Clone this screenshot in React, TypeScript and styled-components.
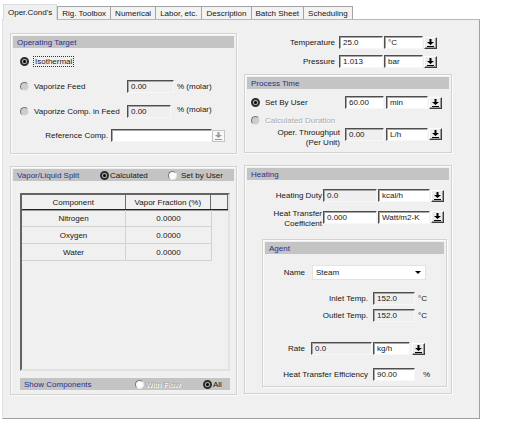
import React from "react";
import styled, { createGlobalStyle, css } from "styled-components";

const GlobalStyle = createGlobalStyle`
  body {
    margin: 0;
    background: #fff;
    font-family: "Liberation Sans", Arial, sans-serif;
    font-size: 8px;
    color: #161616;
  }
`;

const Screen = styled.div`
  width: 506px;
  height: 433px;
`;

const TabBar = styled.div`
  position: relative;
  z-index: 1;
  display: flex;
  align-items: flex-end;
  height: 19px;
  padding-left: 3px;
  box-sizing: border-box;
`;

const Tab = styled.div<{ $active?: boolean }>`
  box-sizing: border-box;
  display: flex;
  align-items: center;
  height: ${(p) => (p.$active ? 16 : 13)}px;
  margin-bottom: ${(p) => (p.$active ? -1 : 0)}px;
  padding: 0 4px;
  border: 1px solid ${(p) => (p.$active ? "#dcdcdc" : "#a4a4a4")};
  border-bottom: none;
  border-left-width: ${(p) => (p.$active ? 1 : 0)}px;
  background: ${(p) => (p.$active ? "#f0f0f0" : "#f3f3f3")};
  white-space: nowrap;
  &:nth-child(2) {
    border-left-width: 1px;
  }
`;

const Panel = styled.div`
  box-sizing: border-box;
  margin-left: 2px;
  width: 478px;
  height: 400px;
  border: 1px solid #a0a0a0;
  border-top-color: #b8b8b8;
  border-left-color: #e2e2e2;
  background: #f0f0f0;
  display: flex;
  gap: 7px;
  padding: 13px 0 0 7px;
`;

const Column = styled.div<{ $w: number }>`
  width: ${(p) => p.$w}px;
  display: flex;
  flex-direction: column;
`;

const Group = styled.div<{ $h: number; $mt?: number; $ml?: number; $w?: number }>`
  box-sizing: border-box;
  height: ${(p) => p.$h}px;
  margin-top: ${(p) => p.$mt ?? 0}px;
  margin-left: ${(p) => p.$ml ?? 0}px;
  width: ${(p) => (p.$w ? `${p.$w}px` : "auto")};
  border: 1px solid #d2d2d2;
  box-shadow: inset 1px 1px 0 #fbfbfb, 1px 1px 0 #fbfbfb;
  padding: 2px;
  display: flex;
  flex-direction: column;
`;

const Header = styled.div<{ $mt?: number; $ml?: number; $w?: number }>`
  flex-shrink: 0;
  height: 12px;
  margin-top: ${(p) => p.$mt ?? 0}px;
  margin-left: ${(p) => p.$ml ?? 0}px;
  width: ${(p) => (p.$w ? `${p.$w}px` : "auto")};
  box-sizing: border-box;
  background: #c4c4c4;
  display: flex;
  align-items: center;
  padding-left: 4px;
`;

const HeaderTitle = styled.span<{ $w?: number }>`
  color: #28318c;
  width: ${(p) => (p.$w ? `${p.$w}px` : "auto")};
  flex-shrink: 0;
`;

const Row = styled.div<{ $mt?: number; $pl?: number; $h?: number; $top?: boolean }>`
  display: flex;
  align-items: ${(p) => (p.$top ? "flex-start" : "center")};
  height: ${(p) => p.$h ?? 13}px;
  margin-top: ${(p) => p.$mt ?? 0}px;
  padding-left: ${(p) => p.$pl ?? 0}px;
  flex-shrink: 0;
`;

const Choice = styled.label<{ $w?: number; $gap?: number }>`
  display: flex;
  align-items: center;
  gap: ${(p) => p.$gap ?? 5}px;
  width: ${(p) => (p.$w ? `${p.$w}px` : "auto")};
  flex-shrink: 0;
`;

const Radio = styled.span<{ $checked?: boolean; $dim?: boolean }>`
  position: relative;
  flex-shrink: 0;
  box-sizing: border-box;
  width: 9px;
  height: 9px;
  border-radius: 50%;
  border: 1px solid;
  border-color: #787878 #e6e6e6 #e6e6e6 #787878;
  background: ${(p) => (p.$dim ? "#cdcdcd" : "#fdfdfd")};
  ${(p) =>
    p.$checked &&
    css`
      border: 2px solid #2c2c2c;
      background: #b8b8b8;
      &::after {
        content: "";
        position: absolute;
        left: 1px;
        top: 1px;
        width: 3px;
        height: 3px;
        border-radius: 50%;
        background: #000;
      }
    `}
`;

const ChoiceText = styled.span<{ $disabled?: boolean; $focus?: boolean }>`
  white-space: nowrap;
  ${(p) =>
    p.$disabled &&
    css`
      color: #a9a9a9;
      text-shadow: 1px 1px 0 #fff;
    `}
  ${(p) =>
    p.$focus &&
    css`
      outline: 1px dotted #333;
      padding: 0 1px;
    `}
`;

const Label = styled.span<{ $w: number; $right?: boolean; $gap?: number }>`
  width: ${(p) => p.$w}px;
  margin-right: ${(p) => p.$gap ?? 0}px;
  text-align: ${(p) => (p.$right ? "right" : "left")};
  line-height: 10px;
  flex-shrink: 0;
  white-space: nowrap;
`;

const Field = styled.div<{ $w: number; $ro?: boolean; $ml?: number; $mt?: number; $h?: number }>`
  box-sizing: border-box;
  width: ${(p) => p.$w}px;
  height: ${(p) => p.$h ?? 13}px;
  margin-left: ${(p) => p.$ml ?? 0}px;
  margin-top: ${(p) => p.$mt ?? 0}px;
  border: 1px solid;
  border-color: #4e4e4e #f7f7f7 #f7f7f7 #4e4e4e;
  box-shadow: inset 1px 1px 0 #a6a6a6;
  background: ${(p) => (p.$ro ? "#efefef" : "#fff")};
  padding-left: 3px;
  display: flex;
  align-items: center;
  flex-shrink: 0;
  white-space: nowrap;
`;

const Suffix = styled.span<{ $ml?: number; $up?: number }>`
  margin-left: ${(p) => p.$ml ?? 3}px;
  position: relative;
  top: ${(p) => -(p.$up ?? 0)}px;
  white-space: nowrap;
`;

const DropBtn = styled.span<{ $ml?: number; $mt?: number; $disabled?: boolean }>`
  box-sizing: border-box;
  width: 13px;
  height: 12px;
  margin-left: ${(p) => p.$ml ?? 0}px;
  margin-top: ${(p) => p.$mt ?? 0}px;
  border: 1px solid;
  border-color: ${(p) => (p.$disabled ? "#c4c4c4" : "#fff #3c3c3c #3c3c3c #fff")};
  box-shadow: ${(p) => (p.$disabled ? "none" : "inset -1px -1px 0 #9c9c9c")};
  background: ${(p) => (p.$disabled ? "#f7f7f7" : "#ececec")};
  display: flex;
  align-items: center;
  justify-content: center;
  flex-shrink: 0;
`;

const Select = styled.div<{ $w: number }>`
  box-sizing: border-box;
  width: ${(p) => p.$w}px;
  height: 15px;
  background: #fff;
  border: 1px solid #e3e3e3;
  display: flex;
  align-items: center;
  justify-content: space-between;
  padding: 0 4px 0 3px;
  flex-shrink: 0;
`;

const Grid = styled.div`
  box-sizing: border-box;
  width: 210px;
  height: 178px;
  margin: 12px 0 0 7px;
  border: 2px solid;
  border-color: #646464 #e2e2e2 #e2e2e2 #646464;
  background: #f0f0f0;
  flex-shrink: 0;
`;

const GridHead = styled.div`
  display: flex;
  height: 14px;
  border-bottom: 1px solid #222;
  box-shadow: 0 1px 0 #9a9a9a;
`;

const HeadCell = styled.div<{ $w: number }>`
  box-sizing: border-box;
  width: ${(p) => p.$w}px;
  border-right: 1px solid #6e6e6e;
  display: flex;
  align-items: center;
  justify-content: center;
`;

const GridRow = styled.div`
  display: flex;
  width: 190px;
  height: 16px;
  border-bottom: 1px solid #d2d2d2;
  &:first-of-type {
    margin-top: 1px;
  }
`;

const Cell = styled.div<{ $w: number }>`
  box-sizing: border-box;
  width: ${(p) => p.$w}px;
  border-right: 1px solid #d2d2d2;
  display: flex;
  align-items: center;
  justify-content: center;
`;

const ArrowIcon = ({ color = "#000" }: { color?: string }) => (
  <svg width="7" height="8" viewBox="0 0 7 8">
    <path d="M2.5 0h2v3h2.5L3.5 6 0 3h2.5z M0 7h7v1H0z" fill={color} />
  </svg>
);

const Caret = () => (
  <svg width="6" height="3" viewBox="0 0 6 3">
    <path d="M0 0h6L3 3z" fill="#000" />
  </svg>
);

const components = ["Nitrogen", "Oxygen", "Water"];

export default function App() {
  return (
    <Screen>
      <GlobalStyle />
      <TabBar>
        <Tab $active>Oper.Cond's</Tab>
        <Tab>Rig. Toolbox</Tab>
        <Tab>Numerical</Tab>
        <Tab>Labor, etc.</Tab>
        <Tab>Description</Tab>
        <Tab>Batch Sheet</Tab>
        <Tab>Scheduling</Tab>
      </TabBar>
      <Panel>
        <Column $w={227}>
          <Group $h={121}>
            <Header>
              <HeaderTitle>Operating Target</HeaderTitle>
            </Header>
            <Row $mt={7} $pl={7}>
              <Choice $w={107}>
                <Radio $checked />
                <ChoiceText $focus>Isothermal</ChoiceText>
              </Choice>
            </Row>
            <Row $mt={12} $pl={7}>
              <Choice $w={107}>
                <Radio $dim />
                <ChoiceText>Vaporize Feed</ChoiceText>
              </Choice>
              <Field $w={47} $ro>
                0.00
              </Field>
              <Suffix $ml={3}>% (molar)</Suffix>
            </Row>
            <Row $mt={12} $pl={7}>
              <Choice $w={107}>
                <Radio $dim />
                <ChoiceText>Vaporize Comp. in Feed</ChoiceText>
              </Choice>
              <Field $w={44} $ro>
                0.00
              </Field>
              <Suffix $ml={6} $up={2}>
                % (molar)
              </Suffix>
            </Row>
            <Row $mt={11} $pl={7}>
              <Label $w={88} $right $gap={3}>
                Reference Comp.
              </Label>
              <Field $w={101} />
              <DropBtn $disabled>
                <ArrowIcon color="#9a9a9a" />
              </DropBtn>
            </Row>
          </Group>

          <Group $h={229} $mt={12}>
            <Header>
              <HeaderTitle $w={83}>Vapor/Liquid Split</HeaderTitle>
              <Choice $w={68} $gap={1}>
                <Radio $checked />
                <ChoiceText>Calculated</ChoiceText>
              </Choice>
              <Choice $gap={4}>
                <Radio />
                <ChoiceText>Set by User</ChoiceText>
              </Choice>
            </Header>
            <Grid>
              <GridHead>
                <HeadCell $w={104}>Component</HeadCell>
                <HeadCell $w={86}>Vapor Fraction (%)</HeadCell>
                <HeadCell $w={17} />
              </GridHead>
              {components.map((c) => (
                <GridRow key={c}>
                  <Cell $w={104}>{c}</Cell>
                  <Cell $w={86}>0.0000</Cell>
                </GridRow>
              ))}
            </Grid>
            <Header $mt={7} $ml={7} $w={210}>
              <HeaderTitle $w={111}>Show Components</HeaderTitle>
              <Choice $w={68} $gap={1}>
                <Radio />
                <ChoiceText $disabled>With Flow</ChoiceText>
              </Choice>
              <Choice $gap={1}>
                <Radio $checked />
                <ChoiceText>All</ChoiceText>
              </Choice>
            </Header>
          </Group>
        </Column>

        <Column $w={208}>
          <Row $mt={3}>
            <Label $w={91} $right $gap={4}>
              Temperature
            </Label>
            <Field $w={44}>25.0</Field>
            <Field $w={39} $ml={1}>
              °C
            </Field>
            <DropBtn $ml={1}>
              <ArrowIcon />
            </DropBtn>
          </Row>
          <Row $mt={6}>
            <Label $w={91} $right $gap={4}>
              Pressure
            </Label>
            <Field $w={44}>1.013</Field>
            <Field $w={39} $ml={1}>
              bar
            </Field>
            <DropBtn $ml={1}>
              <ArrowIcon />
            </DropBtn>
          </Row>

          <Group $h={79} $mt={6}>
            <Header>
              <HeaderTitle>Process Time</HeaderTitle>
            </Header>
            <Row $mt={7} $pl={4}>
              <Choice $w={94}>
                <Radio $checked />
                <ChoiceText>Set By User</ChoiceText>
              </Choice>
              <Field $w={39}>60.00</Field>
              <Field $w={42} $ml={2}>
                min
              </Field>
              <DropBtn $ml={1}>
                <ArrowIcon />
              </DropBtn>
            </Row>
            <Row $mt={5} $pl={4}>
              <Choice>
                <Radio $dim />
                <ChoiceText $disabled>Calculated Duration</ChoiceText>
              </Choice>
            </Row>
            <Row $mt={1} $h={20} $top>
              <Label $w={93} $right $gap={5}>
                Oper. Throughput
                <br />
                (Per Unit)
              </Label>
              <Field $w={39} $ro>
                0.00
              </Field>
              <Field $w={42} $ml={2}>
                L/h
              </Field>
              <DropBtn $ml={1}>
                <ArrowIcon />
              </DropBtn>
            </Row>
          </Group>

          <Group $h={229} $mt={12}>
            <Header>
              <HeaderTitle>Heating</HeaderTitle>
            </Header>
            <Row $mt={9}>
              <Label $w={75} $right $gap={1}>
                Heating Duty
              </Label>
              <Field $w={54} $ro>
                0.0
              </Field>
              <Field $w={52} $ml={1}>
                kcal/h
              </Field>
              <DropBtn $ml={1}>
                <ArrowIcon />
              </DropBtn>
            </Row>
            <Row $mt={7} $h={20} $top>
              <Label $w={75} $right $gap={1}>
                Heat Transfer
                <br />
                Coefficient
              </Label>
              <Field $w={54} $mt={2}>
                0.000
              </Field>
              <Field $w={52} $ml={1} $mt={2}>
                Watt/m2-K
              </Field>
              <DropBtn $ml={1} $mt={2}>
                <ArrowIcon />
              </DropBtn>
            </Row>

            <Group $h={148} $mt={10} $ml={15} $w={185}>
              <Header>
                <HeaderTitle>Agent</HeaderTitle>
              </Header>
              <Row $mt={11} $h={15}>
                <Label $w={40} $right $gap={7}>
                  Name
                </Label>
                <Select $w={114}>
                  <span>Steam</span>
                  <Caret />
                </Select>
              </Row>
              <Row $mt={12}>
                <Label $w={103} $right $gap={5}>
                  Inlet Temp.
                </Label>
                <Field $w={42} $ro>
                  152.0
                </Field>
                <Suffix $ml={3}>°C</Suffix>
              </Row>
              <Row $mt={4}>
                <Label $w={103} $right $gap={5}>
                  Outlet Temp.
                </Label>
                <Field $w={42} $ro>
                  152.0
                </Field>
                <Suffix $ml={3}>°C</Suffix>
              </Row>
              <Row $mt={20}>
                <Label $w={40} $right $gap={6}>
                  Rate
                </Label>
                <Field $w={61} $ro>
                  0.0
                </Field>
                <Field $w={37} $ml={1}>
                  kg/h
                </Field>
                <DropBtn $ml={2}>
                  <ArrowIcon />
                </DropBtn>
              </Row>
              <Row $mt={13}>
                <Label $w={103} $right $gap={5}>
                  Heat Transfer Efficiency
                </Label>
                <Field $w={42}>90.00</Field>
                <Suffix $ml={8}>%</Suffix>
              </Row>
            </Group>
          </Group>
        </Column>
      </Panel>
    </Screen>
  );
}
